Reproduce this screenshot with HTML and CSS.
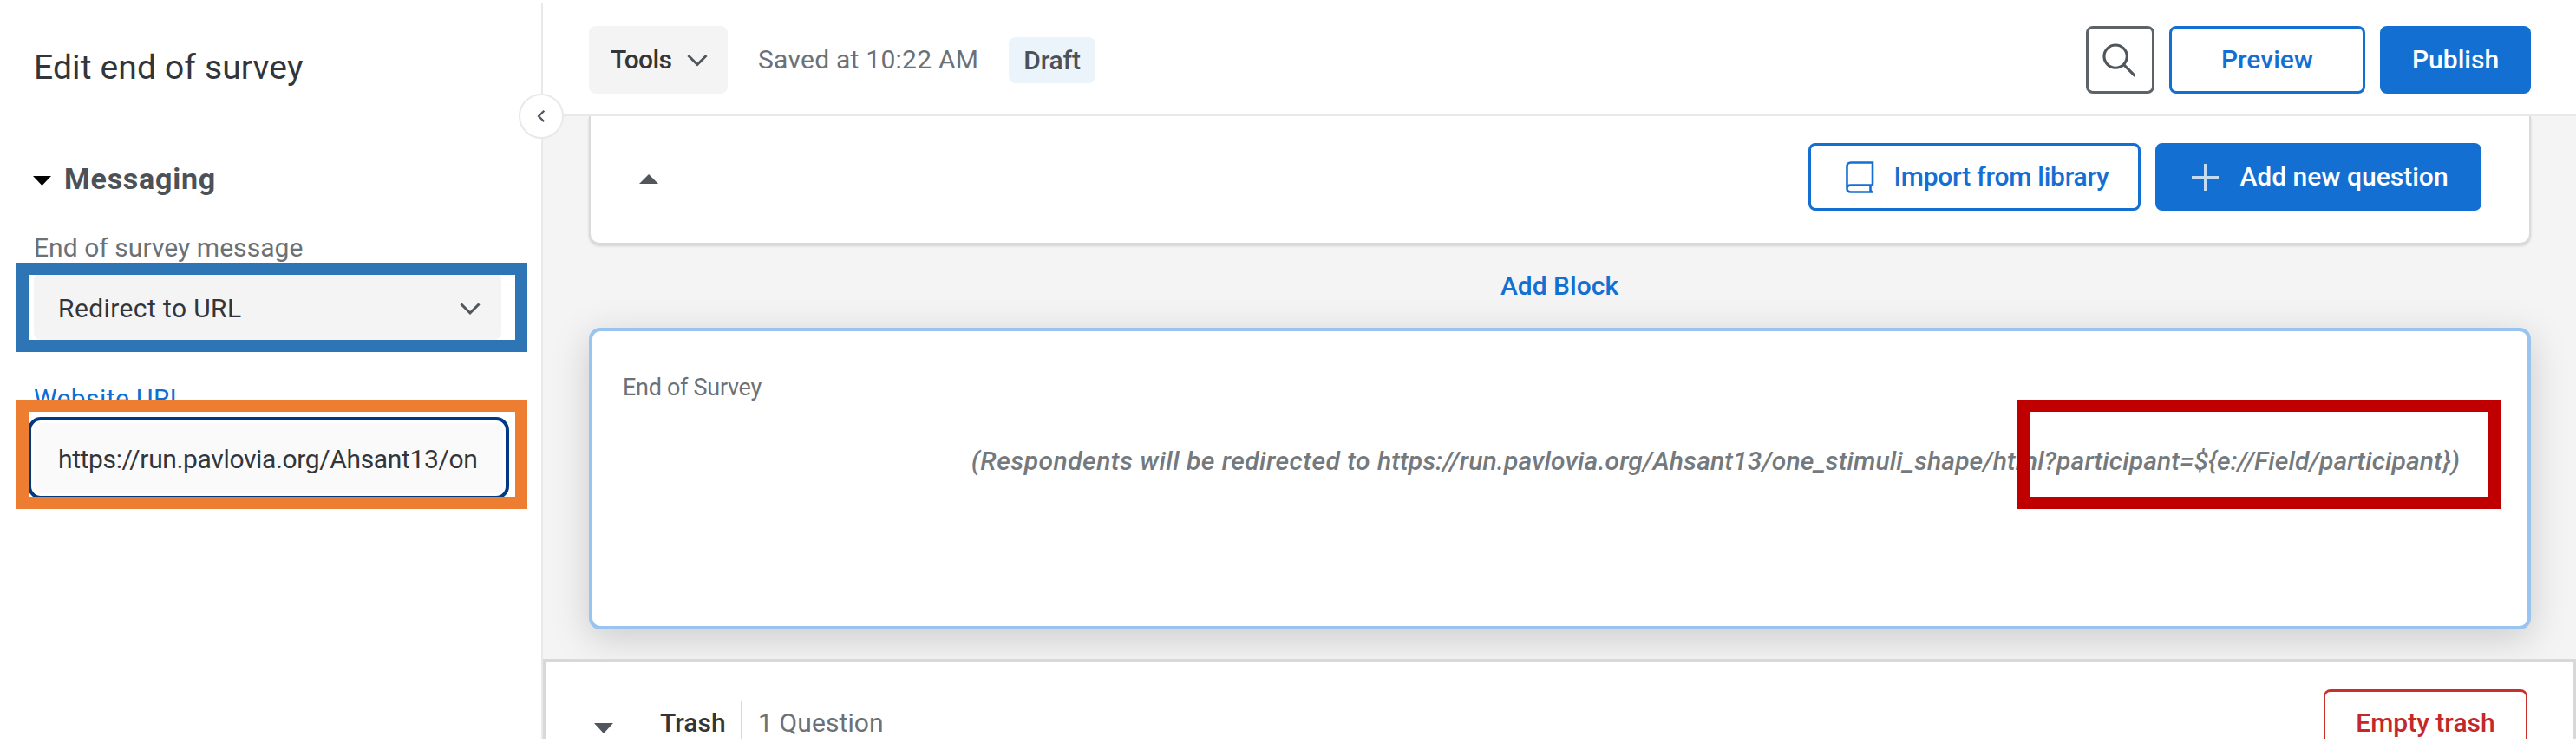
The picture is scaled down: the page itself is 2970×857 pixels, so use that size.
FILE: index.html
```html
<!DOCTYPE html>
<html lang="en">
<head>
<meta charset="utf-8">
<title>Edit end of survey</title>
<link rel="stylesheet" href="styles.css">
</head>
<body>
<div class="app">
  <aside class="sidebar">
    <h1 class="title">Edit end of survey</h1>
    <h2 class="section"><svg class="caret" width="21" height="11" viewBox="0 0 21 11"><path d="M0 0H21L10.5 11Z" fill="#000"/></svg><span>Messaging</span></h2>
    <div class="label">End of survey message</div>
    <div class="select"><span>Redirect to URL</span>
      <svg width="24" height="14" viewBox="0 0 24 14" fill="none" stroke="#50565b" stroke-width="3"><path d="M1.5 1.5L12 12L22.500 1.500"/></svg></div>
    <div class="label link">Website URL</div>
    <div class="input"><span>https://run.pavlovia.org/Ahsant13/on</span></div>
    <div class="mark mark-blue"></div>
    <div class="mark mark-orange"></div>
    <div class="collapse"><svg width="10" height="16" viewBox="0 0 12 18" fill="none" stroke="#50565b" stroke-width="2.800"><path d="M10 1.500L2.500 9L10 16.500"/></svg></div>
  </aside>
  <main class="main">
    <header class="topbar">
      <div class="tools"><span>Tools</span><svg width="24" height="15" viewBox="0 0 24 15" fill="none" stroke="#50565b" stroke-width="3"><path d="M1.500 2L12 12.500L22.500 2"/></svg></div>
      <span class="saved">Saved at 10:22 AM</span>
      <span class="draft">Draft</span>
      <div class="actions">
        <div class="btn search"><svg width="39" height="39" viewBox="0 0 40 40" fill="none" stroke="#50565b" stroke-width="3.200"><circle cx="15.500" cy="15.500" r="13.500"/><path d="M25 25L38.500 38.500"/></svg></div>
        <div class="btn preview">Preview</div>
        <div class="btn solid publish">Publish</div>
      </div>
    </header>
    <section class="canvas">
      <div class="block">
        <svg width="22" height="11" viewBox="0 0 22 11"><path d="M0 11H22L11 0Z" fill="#50565b"/></svg>
        <div class="actions">
          <div class="btn import"><svg width="33" height="37" viewBox="0 0 33 37" fill="none" stroke="#146fd2" stroke-width="2.600"><path d="M31 27.500V1.500H6Q1.500 1.500 1.500 6V31M31 27.500H6Q1.500 27.500 1.500 31.500T6 35.500H32M28.500 27.500V33.500L30 35.500"/></svg><span>Import from library</span></div>
          <div class="btn solid addq"><svg width="31" height="31" viewBox="0 0 31 31" stroke="#c4dbf4" stroke-width="3"><path d="M0 15.500H31M15.500 0V31"/></svg><span>Add new question</span></div>
        </div>
      </div>
      <div class="addblock">Add Block</div>
      <div class="eos">
        <div class="eos-label">End of Survey</div>
        <div class="eos-text"><span class="lead">(Respondents will be redirected to </span>https://run.pavlovia.org/Ahsant13/one_stimuli_shape/html?participant=${e://Field/participant})</div>
        <div class="mark mark-red"></div>
      </div>
      <div class="trash">
        <svg width="22" height="12" viewBox="0 0 22 12"><path d="M0 0H22L11 12Z" fill="#50565b"/></svg>
        <span class="trash-name">Trash</span>
        <span class="trash-count">1 Question</span>
        <div class="btn empty">Empty trash</div>
      </div>
    </section>
  </main>
</div>
</body>
</html>
```
FILE: styles.css
```css
* { box-sizing: border-box; margin: 0; }
body { background: #fff; font: 400 30px/40px Roboto, "Liberation Sans", sans-serif; color: #32363a; white-space: nowrap; overflow: hidden; }
svg { display: block; flex: none; overflow: visible; }
.app { display: flex; width: 2970px; height: 852px; padding-top: 4px; overflow: hidden; }

.sidebar { position: relative; flex: none; width: 626px; border-right: 2px solid #e9e9e9; padding: 49px 0 0 39px; }
.title { font-size: 39px; font-weight: 400; line-height: 50px; letter-spacing: .15px; }
.section { display: flex; align-items: center; gap: 15px; margin-top: 80px; font-size: 34px; font-weight: 700; line-height: 46px; letter-spacing: .75px; color: #4b5157; }
.section .caret { margin: 4px 0 0 -1px; }
.label { margin-top: 37px; color: #6c7176; height: 40px; letter-spacing: .05px; }
.select { display: flex; align-items: center; justify-content: space-between; width: 539px; height: 77px; margin-top: 9px; padding: 4px 24px 0 28px; background: #f4f4f4; border-radius: 8px; letter-spacing: .4px; }
.label.link { margin-top: 48px; color: #0b6fd6; letter-spacing: .4px; }
.input { display: flex; align-items: center; width: 555px; height: 95px; margin: 1px 0 0 -7px; padding: 2px 0 0 31px; background: #fafafa; border: 4px solid #003a85; border-radius: 15px; box-shadow: inset 0 0 0 3px #fff; letter-spacing: -.36px; }

.mark { position: absolute; border: 14px solid; }
.mark-blue { left: 19px; top: 299px; width: 589px; height: 103px; border-color: #2e75b6; }
.mark-orange { left: 19px; top: 457px; width: 589px; height: 126px; border-color: #ed7d31; }
.collapse { position: absolute; left: 598px; top: 104px; width: 52px; height: 52px; display: flex; align-items: center; justify-content: center; background: #fff; border: 2px solid #e9e9e9; border-radius: 50%; z-index: 2; }

.main { flex: 1; display: flex; flex-direction: column; min-width: 0; }
.topbar { display: flex; flex: none; align-items: center; height: 130px; padding: 2px 52px 0 53px; border-bottom: 2px solid #e9e9e9; }
.tools { display: flex; align-items: center; justify-content: space-between; width: 160px; height: 78px; padding: 0 23px 0 25px; background: #f4f4f4; border-radius: 8px; font-weight: 500; letter-spacing: -.6px; }
.saved { width: 288px; padding-left: 35px; color: #6c7176; letter-spacing: .25px; }
.draft { display: flex; justify-content: center; width: 100px; height: 53px; line-height: 53px; margin-left: 36px; background: #ebf3fb; border-radius: 8px; color: #4b5157; font-weight: 500; letter-spacing: -.2px; }
.saved, .draft { flex: none; }
.actions { display: flex; gap: 17px; margin-left: auto; }
.btn { display: flex; align-items: center; justify-content: center; height: 78px; border: 3px solid #146fd2; border-radius: 8px; background: #fff; color: #146fd2; font-weight: 500; }
.btn.solid { background: #146fd2; color: #fff; }
.search { width: 79px; padding-right: 2px; border-color: #5e6367; }
.preview { width: 226px; }
.publish { width: 174px; }

.canvas { flex: 1; display: flex; flex-direction: column; background: #f4f4f4; }
.block { display: flex; flex: none; align-items: flex-start; height: 148px; margin: 0 52px 0 53px; padding: 31px 55px 0 56px; background: #fff; border: 2px solid #dadada; border-top: 0; border-radius: 0 0 12px 12px; box-shadow: 0 2px 3px rgba(0,0,0,.13); }
.block > svg { margin-top: 36px; }
.import { width: 383px; gap: 23px; padding-left: 6px; letter-spacing: -.25px; }
.addq { width: 376px; gap: 24px; padding-left: 4px; }
.addblock { display: flex; flex: none; justify-content: center; align-items: center; height: 96px; color: #146fd2; font-weight: 500; }
.eos { position: relative; height: 348px; flex: none; margin: 0 52px 0 53px; padding: 47px 78px 0 35px; background: #fff; border: 4px solid #99c4ef; border-radius: 13px; box-shadow: 0 10px 44px rgba(0,0,0,.17); }
.eos-label { font-size: 27px; line-height: 36px; letter-spacing: -.3px; color: #6c7176; }
.eos-text { margin-top: 47px; text-align: right; font-style: italic; font-weight: 500; letter-spacing: .11px; color: #74797d; }
.eos-text .lead { letter-spacing: .48px; }
.mark-red { left: 1643px; top: 79px; width: 557px; height: 126px; border-color: #c00000; }
.trash { position: relative; display: flex; flex: none; align-items: flex-start; height: 140px; margin-top: 34px; padding: 32px 52px 0 56px; background: #fff; border: 3px solid #d8d8d8; }
.trash > svg { margin-top: 39px; }
.trash-name { width: 149px; height: 60px; margin-top: 14px; padding: 5px 0 0 54px; border-right: 2px solid #d8d8d8; font-weight: 500; }
.trash-count { margin-top: 14px; padding: 5px 0 0 18px; color: #6c7176; letter-spacing: .1px; }
.empty { width: 235px; height: 100px; align-items: flex-start; padding-top: 16px; margin-left: auto; margin-right: 1px; border-color: #c9302c; color: #c4282a; border-width: 3px 2px; }
```
